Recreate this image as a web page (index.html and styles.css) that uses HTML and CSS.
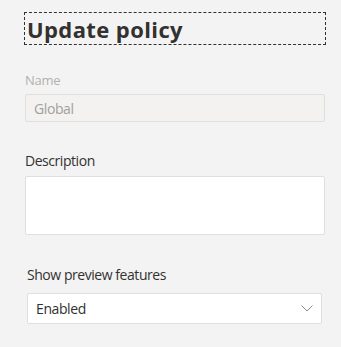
FILE: index.html
```html
<!DOCTYPE html>
<html lang="en">
<head>
  <meta charset="UTF-8" />
  <title>Update policy</title>
  <link rel="stylesheet" href="styles.css">
</head>
<body>
  <div class="panel">
    <h1 class="panel-title">Update policy</h1>

    <div class="field field-name">
      <label class="field-label disabled" for="name">Name</label>
      <input id="name" class="text-input" type="text" value="Global" disabled />
    </div>

    <div class="field field-desc">
      <label class="field-label" for="desc">Description</label>
      <textarea id="desc" class="text-area"></textarea>
    </div>

    <div class="field field-preview">
      <label class="field-label" for="preview">Show preview features</label>
      <div class="dropdown" id="preview">
        <span class="dropdown-value">Enabled</span>
        <svg class="dropdown-chevron" viewBox="0 0 12 7" aria-hidden="true">
          <path d="M0.5 0.5 L6 6 L11.5 0.5" fill="none" stroke="#8a8886" stroke-width="1" />
        </svg>
      </div>
    </div>
  </div>
</body>
</html>
```

FILE: styles.css
```css
/* Base */
html, body {
  margin: 0;
  padding: 0;
  background: #f3f3f3;
  font-family: 'Open Sans', sans-serif;
  color: #323130;
}

.panel {
  padding: 12px 16px 0 24px;
}

/* Titre avec cadre de focus */
.panel-title {
  box-sizing: border-box;
  width: 302px;
  margin: 0;
  padding: 2px 0 0 2px;
  height: 33px;
  border: 1px dashed #323130;
  font-size: 22px;
  font-weight: 700;
  line-height: 29px;
  letter-spacing: 0.4px;
  white-space: nowrap;
}

/* Champs */
.field {
  display: flex;
  flex-direction: column;
  margin-left: 1px;
  width: 300px;
}
.field-name { margin-top: 26px; }
.field-desc { margin-top: 29px; }
.field-preview {
  margin-top: 30px;
  margin-left: 3px;
  width: 295px;
}

.field-label {
  font-size: 14px;
  line-height: 20px;
  letter-spacing: -0.45px;
  margin-bottom: 5px;
}
.field-label.disabled {
  font-size: 13px;
  line-height: 18px;
  letter-spacing: -0.3px;
  color: #b3b0ad;
}
.field-preview .field-label {
  margin-bottom: 8px;
}

.text-input {
  box-sizing: border-box;
  height: 28px;
  margin: 0;
  padding: 0 8px;
  border: 1px solid #e1dfdd;
  border-radius: 2px;
  background: #f3f2f1;
  font-family: inherit;
  font-size: 14px;
  letter-spacing: -0.4px;
  color: #a19f9d;
}

.text-area {
  box-sizing: border-box;
  height: 59px;
  margin: 0;
  border: 1px solid #e1dfdd;
  border-radius: 2px;
  background: #fff;
  resize: none;
}

/* Liste déroulante */
.dropdown {
  box-sizing: border-box;
  height: 31px;
  display: flex;
  align-items: center;
  justify-content: space-between;
  padding: 0 8px 0 8px;
  border: 1px solid #e1dfdd;
  border-radius: 2px;
  background: #fff;
}
.dropdown-value {
  font-size: 14px;
  line-height: 29px;
  letter-spacing: -0.4px;
}
.dropdown-chevron {
  width: 12px;
  height: 7px;
}
```
